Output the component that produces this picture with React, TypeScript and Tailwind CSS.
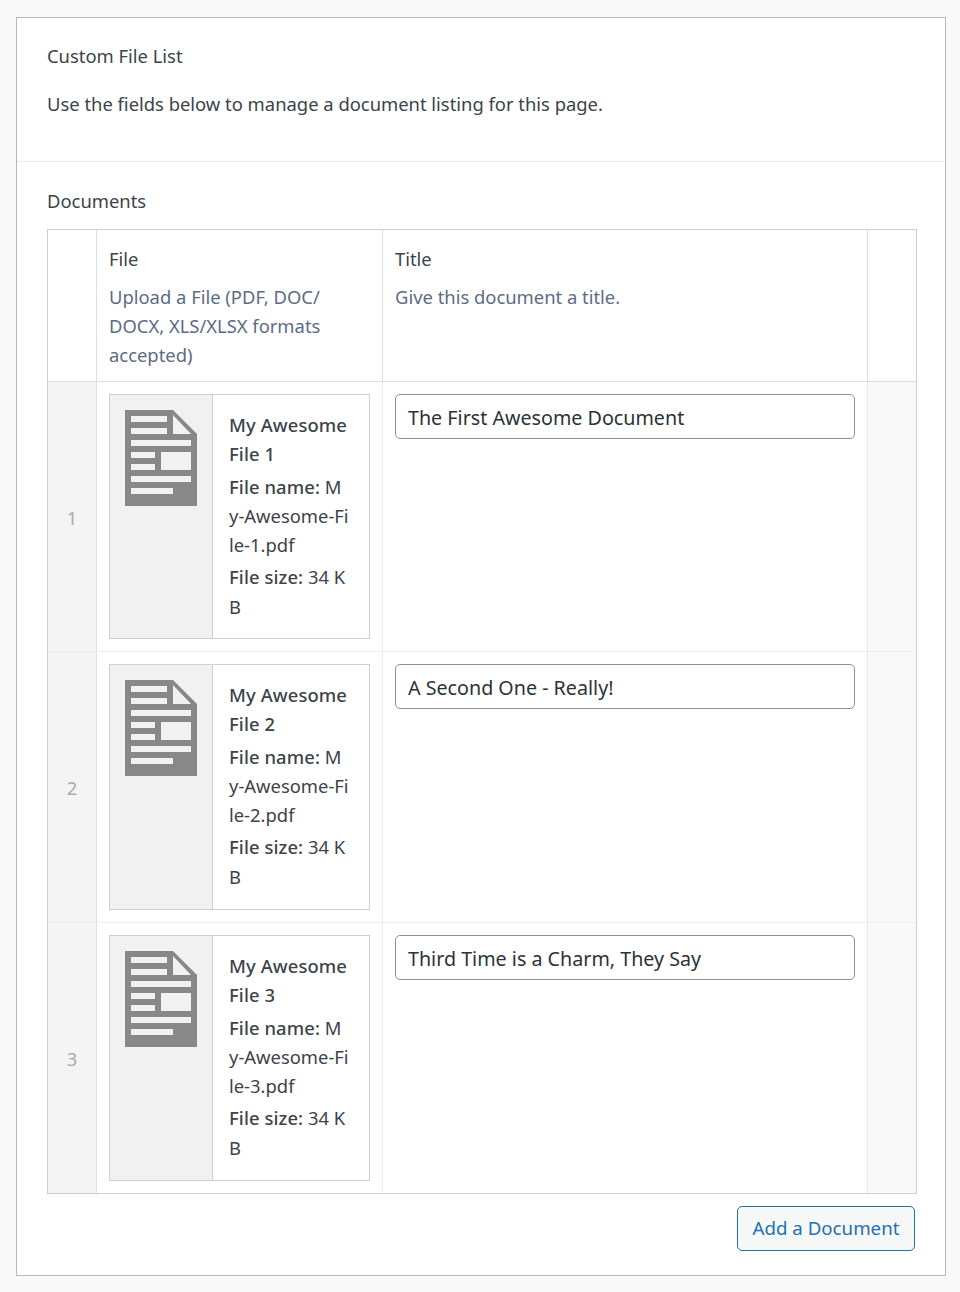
import React from "react";

const FONT = "font-['Noto_Sans','Open_Sans',sans-serif]";

const docs = [
  { n: 1, id: "1", title: "The First Awesome Document", h: "h-[270px]", cardH: "h-[245px]" },
  { n: 2, id: "2", title: "A Second One - Really!", h: "h-[271px]", cardH: "h-[246px]" },
  { n: 3, id: "3", title: "Third Time is a Charm, They Say", h: "h-[270px]", cardH: "h-[246px]" },
];

const DocIcon = () => (
  <svg width="72" height="96" viewBox="0 0 72 96" className="block">
    <path d="M0 0H48L72 24V96H0Z" fill="#888888" />
    <path
      d="M48 5L66 24H48Z M6 6H42V12H6Z M6 18H42V24H6Z M6 30H66V36H6Z M6 42H30V48H6Z M36 42H66V60H36Z M6 54H30V60H6Z M6 66H66V72H6Z M6 78H48V84H6Z"
      fill="#f1f1f1"
    />
  </svg>
);

const FileCard: React.FC<{ id: string; cardH: string }> = ({ id, cardH }) => (
  <div className={`flex ${cardH} w-[261px] border border-[#ccd0d4] bg-white`}>
    <div className="w-[103px] shrink-0 border-r border-[#ccd0d4] bg-[#f1f1f1] pl-[15px] pt-[15px]">
      <DocIcon />
    </div>
    <div className="flex-1 whitespace-nowrap pl-4 pt-[15px] leading-[29.3px]">
      <p className="font-medium tracking-[0.1px]">My Awesome</p>
      <p className="mb-[3px] font-medium tracking-[0.1px]">File {id}</p>
      <p className="mb-[3px]">
        <strong className="font-medium tracking-[0.1px]">File name:</strong> M
        <br />
        y-Awesome-Fi
        <br />
        le-{id}.pdf
      </p>
      <p>
        <strong className="font-medium tracking-[0.1px]">File size:</strong> 34 K
        <br />B
      </p>
    </div>
  </div>
);

export default function App() {
  return (
    <div className={`${FONT} h-[1292px] bg-[#f9f9f9] pl-4 pr-[14px] pt-[17px] text-[18.4px] text-[#3c434a]`}>
      <div className="h-[1259px] border border-[#b4b9be] bg-white">
        <div className="h-[144px] border-b border-[#eeeeee] pl-[30px] pt-[23px]">
          <p className="leading-[29px]">Custom File List</p>
          <p className="mt-[19px] leading-[29px]">Use the fields below to manage a document listing for this page.</p>
        </div>

        <div className="px-[30px] pr-[28px] pt-6">
          <p className="mb-[14px] leading-[29px]">Documents</p>

          <div className="w-[870px] border border-[#ccd0d4]">
            <div className="flex h-[152px] border-b border-[#dfdfdf]">
              <div className="w-[49px] border-r border-[#dfdfdf]" />
              <div className="w-[286px] border-r border-[#dfdfdf] px-3 pt-[14px] leading-[29px]">
                <p className="mb-[9px]">File</p>
                <p className="text-[#5d6b85]">
                  Upload a File (PDF, DOC/
                  <br />
                  DOCX, XLS/XLSX formats
                  <br />
                  accepted)
                </p>
              </div>
              <div className="w-[485px] border-r border-[#dfdfdf] px-3 pt-[14px] leading-[29px]">
                <p className="mb-[9px]">Title</p>
                <p className="text-[#5d6b85]">Give this document a title.</p>
              </div>
              <div className="flex-1" />
            </div>

            {docs.map((d, i) => (
              <div key={d.n} className={`flex ${d.h} ${i < 2 ? "border-b border-[#eeeeee]" : ""}`}>
                <div className="flex w-[49px] items-center justify-center border-r border-[#e1e1e1] bg-[#f4f4f4] pt-[2px] text-[#aaaaaa]">
                  {d.n}
                </div>
                <div className="w-[286px] border-r border-[#eeeeee] px-3 pt-3">
                  <FileCard id={d.id} cardH={d.cardH} />
                </div>
                <div className="w-[485px] border-r border-[#e6e6e6] px-3 pt-3">
                  <input
                    readOnly
                    value={d.title}
                    className="h-[45px] w-[460px] rounded-[5px] border border-[#8c8f94] bg-white px-3 pt-[1px] text-[19.7px] text-[#2c3338] outline-none"
                  />
                </div>
                <div className="flex-1 bg-[#f9f9f9]" />
              </div>
            ))}
          </div>

          <div className="mt-3 flex justify-end pr-[2px]">
            <button className="h-[45px] w-[178px] rounded-[5px] border border-[#2271b1] bg-[#f6f7f7] text-[18.7px] text-[#2271b1]">
              Add a Document
            </button>
          </div>
        </div>
      </div>
    </div>
  );
}
